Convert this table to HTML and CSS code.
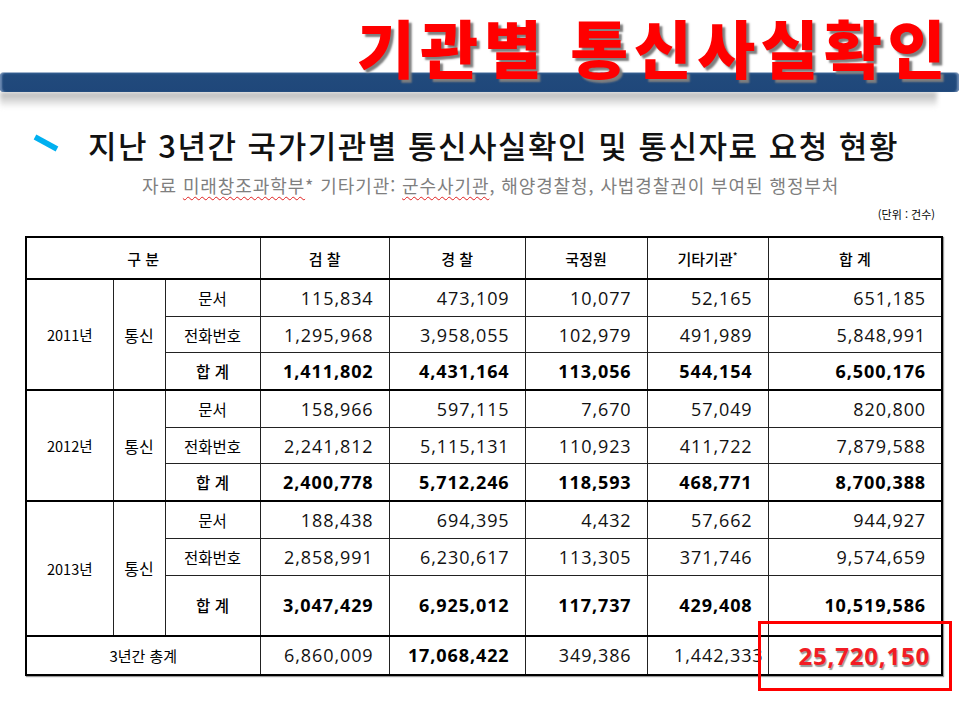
FILE: index.html
```html
<!DOCTYPE html>
<html lang="ko">
<head>
<meta charset="utf-8">
<title>기관별 통신사실확인</title>
<link rel="stylesheet" href="styles.css">
</head>
<body>
<div class="slide">
  <header class="banner">
    <h1 class="banner-title">기관별 통신사실확인</h1>
    <div class="banner-bar"></div>
    <div class="banner-shadow"></div>
  </header>

  <section class="content">
    <h2 class="heading">
      <svg class="bullet" width="28" height="18" viewBox="0 0 28 18"><line x1="3" y1="3" x2="25" y2="15" stroke="#00b0f0" stroke-width="5.5"/></svg>
      <span>지난 3년간 국가기관별 통신사실확인 및 통신자료 요청 현황</span>
    </h2>
    <p class="source">자료 <span class="squiggle">미래창조과학부</span>* 기타기관: <span class="squiggle">군수사기관</span>, 해양경찰청, 사법경찰권이 부여된 행정부처</p>
    <p class="unit">(단위 : 건수)</p>

    <div class="table-wrap">
      <table class="stats">
        <colgroup>
          <col class="c-year"><col class="c-type"><col class="c-label">
          <col class="c-n1"><col class="c-n2"><col class="c-n3"><col class="c-n4"><col class="c-n5">
        </colgroup>
        <thead>
          <tr class="head-row">
            <th colspan="3">구 분</th>
            <th class="sep-grey">검 찰</th>
            <th>경 찰</th>
            <th>국정원</th>
            <th>기타기관<sup>*</sup></th>
            <th>합 계</th>
          </tr>
        </thead>
        <tbody class="year">
          <tr>
            <td rowspan="3" class="yr">2011년</td>
            <td rowspan="3" class="kind">통신</td>
            <td class="lbl">문서</td>
            <td class="num sep-grey">115,834</td><td class="num">473,109</td><td class="num">10,077</td><td class="num">52,165</td><td class="num">651,185</td>
          </tr>
          <tr>
            <td class="lbl">전화번호</td>
            <td class="num sep-grey">1,295,968</td><td class="num">3,958,055</td><td class="num">102,979</td><td class="num">491,989</td><td class="num">5,848,991</td>
          </tr>
          <tr class="sum">
            <td class="lbl">합 계</td>
            <td class="num sep-grey">1,411,802</td><td class="num">4,431,164</td><td class="num">113,056</td><td class="num">544,154</td><td class="num">6,500,176</td>
          </tr>
        </tbody>
        <tbody class="year">
          <tr>
            <td rowspan="3" class="yr">2012년</td>
            <td rowspan="3" class="kind">통신</td>
            <td class="lbl">문서</td>
            <td class="num sep-grey">158,966</td><td class="num">597,115</td><td class="num">7,670</td><td class="num">57,049</td><td class="num">820,800</td>
          </tr>
          <tr>
            <td class="lbl">전화번호</td>
            <td class="num sep-grey">2,241,812</td><td class="num">5,115,131</td><td class="num">110,923</td><td class="num">411,722</td><td class="num">7,879,588</td>
          </tr>
          <tr class="sum">
            <td class="lbl">합 계</td>
            <td class="num sep-grey">2,400,778</td><td class="num">5,712,246</td><td class="num">118,593</td><td class="num">468,771</td><td class="num">8,700,388</td>
          </tr>
        </tbody>
        <tbody class="year">
          <tr>
            <td rowspan="3" class="yr">2013년</td>
            <td rowspan="3" class="kind">통신</td>
            <td class="lbl">문서</td>
            <td class="num sep-grey">188,438</td><td class="num">694,395</td><td class="num">4,432</td><td class="num">57,662</td><td class="num">944,927</td>
          </tr>
          <tr>
            <td class="lbl">전화번호</td>
            <td class="num sep-grey">2,858,991</td><td class="num">6,230,617</td><td class="num">113,305</td><td class="num">371,746</td><td class="num">9,574,659</td>
          </tr>
          <tr class="sum tall">
            <td class="lbl">합 계</td>
            <td class="num sep-grey">3,047,429</td><td class="num">6,925,012</td><td class="num">117,737</td><td class="num">429,408</td><td class="num">10,519,586</td>
          </tr>
        </tbody>
        <tbody class="year total">
          <tr>
            <td colspan="3" class="lbl total-lbl">3년간 총계</td>
            <td class="num sep-grey">6,860,009</td>
            <td class="num bold">17,068,422</td>
            <td class="num">349,386</td>
            <td class="num tight">1,442,333</td>
            <td class="num grand">25,720,150</td>
          </tr>
        </tbody>
      </table>
      <div class="highlight"></div>
    </div>
  </section>
</div>
</body>
</html>
```

FILE: styles.css
```css
html, body {
  margin: 0;
  padding: 0;
  background: #ffffff;
}

.slide {
  width: 959px;
  height: 717px;
  overflow: hidden;
  font-family: "Noto Sans CJK KR", "Noto Sans", sans-serif;
  color: #000;
}

/* ---------- banner ---------- */
.banner-title {
  position: relative;
  z-index: 2;
  margin: 0;
  padding: 10px 8px 0 0;
  height: 72px;
  line-height: 72px;
  text-align: right;
  font-size: 63px;
  font-weight: 900;
  letter-spacing: 5.5px;
  color: #ff0000;
  text-shadow: 3px 3px 2px #7f7f7f;
  white-space: nowrap;
}

.banner-bar {
  position: relative;
  z-index: 1;
  margin-top: -10px;
  height: 19px;
  background: linear-gradient(#2f5a8e 0, #214a7c 2px, #1f477a 100%);
  border-top: 1px solid #9fb3cc;
  border-radius: 4px;
  box-shadow: inset 3px 0 2px -1px #6d8bb3, inset -3px 0 2px -1px #6d8bb3;
}

.banner-shadow {
  height: 16px;
  margin-right: 22px;
  background: linear-gradient(#b4b4b4, #d9d9d9 50%, #ffffff);
  filter: blur(2px);
}

/* ---------- heading ---------- */
.content {
  padding-top: 17px;
}

.heading {
  display: flex;
  align-items: center;
  margin: 0;
  padding-left: 32px;
  height: 40px;
  line-height: 40px;
  font-size: 31px;
  font-weight: 500;
  letter-spacing: 1.5px;
  color: #111;
  white-space: nowrap;
}

.bullet {
  display: block;
  flex: none;
  margin: -4px 28px 0 0;
}

.source {
  margin: 8px 0 0;
  padding-left: 142px;
  height: 24px;
  line-height: 24px;
  font-size: 18px;
  letter-spacing: 0.9px;
  color: #7f7f7f;
  white-space: nowrap;
}

.squiggle {
  text-decoration: underline wavy #e02020;
  text-decoration-thickness: 1px;
  text-underline-offset: 3px;
}

.unit {
  margin: 10px 0 0;
  padding-right: 24px;
  height: 14px;
  line-height: 14px;
  text-align: right;
  font-size: 11px;
  color: #000;
}

/* ---------- table ---------- */
.table-wrap {
  position: relative;
  margin: 15px 0 0 25px;
  width: 916px;
}

.stats {
  width: 916px;
  table-layout: fixed;
  border-collapse: collapse;
  border: 2px solid #000;
  box-shadow: 1px 1px 1px #9a9a9a;
}

.c-year { width: 87px; }
.c-type { width: 52px; }
.c-label { width: 95px; }
.c-n1 { width: 129px; }
.c-n2 { width: 136px; }
.c-n3 { width: 122px; }
.c-n4 { width: 121px; }
.c-n5 { width: 174px; }

.stats th,
.stats td {
  border: 1px solid #222;
  padding: 0;
  vertical-align: middle;
  white-space: nowrap;
}

.stats th {
  height: 40px;
  font-size: 15px;
  font-weight: 500;
  text-align: center;
  border-bottom: 2px solid #000;
}

.stats th sup {
  font-size: 10px;
  vertical-align: 5px;
  line-height: 0;
}

.stats td {
  height: 35.7px;
}

.stats tbody.year {
  border-top: 2px solid #000;
}

.stats .sep-grey {
  border-left-color: #6e6e6e;
}

.yr {
  text-align: center;
  font-size: 14.5px;
}

.kind {
  text-align: center;
  font-size: 16px;
}

.lbl {
  text-align: center;
  font-size: 15.5px;
}

.total-lbl {
  font-size: 15px;
}

.num {
  text-align: right;
  padding-right: 15px !important;
  font-family: "Open Sans", "Noto Sans", sans-serif;
  font-size: 18px;
  letter-spacing: 0.9px;
  color: #111;
}

.sum .num,
.num.bold {
  font-weight: 700;
  color: #000;
}

.sum .lbl {
  font-weight: 500;
}

.sum.tall td {
  height: 59px;
}

.total td {
  height: 37px;
}

.num.tight {
  padding-right: 4px !important;
}

.num.grand {
  padding-right: 11px !important;
  font-size: 24px;
  font-weight: 700;
  letter-spacing: 0.8px;
  color: #f21c24;
  text-shadow: 1px 2px 1px #9a9a9a;
}

.highlight {
  position: absolute;
  left: 733px;
  top: 385px;
  width: 194px;
  height: 70px;
  box-sizing: border-box;
  border: 3px solid #ff0000;
  pointer-events: none;
}
```
